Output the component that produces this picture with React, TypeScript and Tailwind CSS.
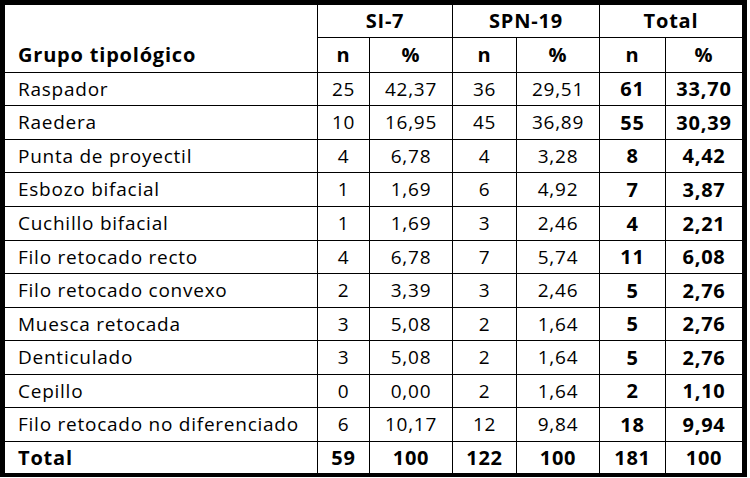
import React from "react";

const rows: string[][] = [
  ["Raspador", "25", "42,37", "36", "29,51", "61", "33,70"],
  ["Raedera", "10", "16,95", "45", "36,89", "55", "30,39"],
  ["Punta de proyectil", "4", "6,78", "4", "3,28", "8", "4,42"],
  ["Esbozo bifacial", "1", "1,69", "6", "4,92", "7", "3,87"],
  ["Cuchillo bifacial", "1", "1,69", "3", "2,46", "4", "2,21"],
  ["Filo retocado recto", "4", "6,78", "7", "5,74", "11", "6,08"],
  ["Filo retocado convexo", "2", "3,39", "3", "2,46", "5", "2,76"],
  ["Muesca retocada", "3", "5,08", "2", "1,64", "5", "2,76"],
  ["Denticulado", "3", "5,08", "2", "1,64", "5", "2,76"],
  ["Cepillo", "0", "0,00", "2", "1,64", "2", "1,10"],
  ["Filo retocado no diferenciado", "6", "10,17", "12", "9,84", "18", "9,94"],
];

const total = ["Total", "59", "100", "122", "100", "181", "100"];

const cell = "bg-white flex items-center";
const bold = "font-bold text-[20px] tracking-[0.8px]";

export default function App() {
  return (
    <div
      className="w-[750px] h-[478px] bg-white text-black text-[19px] leading-none tracking-[0.75px]"
      style={{ fontFamily: '"Open Sans", "Noto Sans", sans-serif' }}
    >
      <div className="w-[747px] h-[477px] border-[5px] border-b-4 border-black bg-black grid gap-px grid-cols-[312px_51px_82px_63px_82px_65px_76px] grid-rows-[32px_34px_32px_33px_32px_33px_33px_32px_33px_32px_33px_32px_33px_31px]">
        <div className={`${cell} row-span-2 items-end`}>
          <div className={`h-[34px] flex items-center pl-[13px] ${bold}`}>Grupo tipológico</div>
        </div>
        <div className={`${cell} col-span-2 justify-center ${bold}`}>SI-7</div>
        <div className={`${cell} col-span-2 justify-center ${bold}`}>SPN-19</div>
        <div className={`${cell} col-span-2 justify-center ${bold}`}>Total</div>
        {["n", "%", "n", "%", "n", "%"].map((h, i) => (
          <div key={i} className={`${cell} justify-center ${bold}`}>
            {h}
          </div>
        ))}
        {rows.map((r, ri) =>
          r.map((v, ci) => (
            <div
              key={`${ri}-${ci}`}
              className={`${cell} ${ci === 0 ? "pl-[13px]" : "justify-center"} ${ci >= 5 ? bold : ""}`}
            >
              {v}
            </div>
          ))
        )}
        {total.map((v, ci) => (
          <div
            key={`t-${ci}`}
            className={`${cell} ${bold} ${ci === 0 ? "pl-[13px]" : "justify-center"}`}
          >
            {v}
          </div>
        ))}
      </div>
    </div>
  );
}
